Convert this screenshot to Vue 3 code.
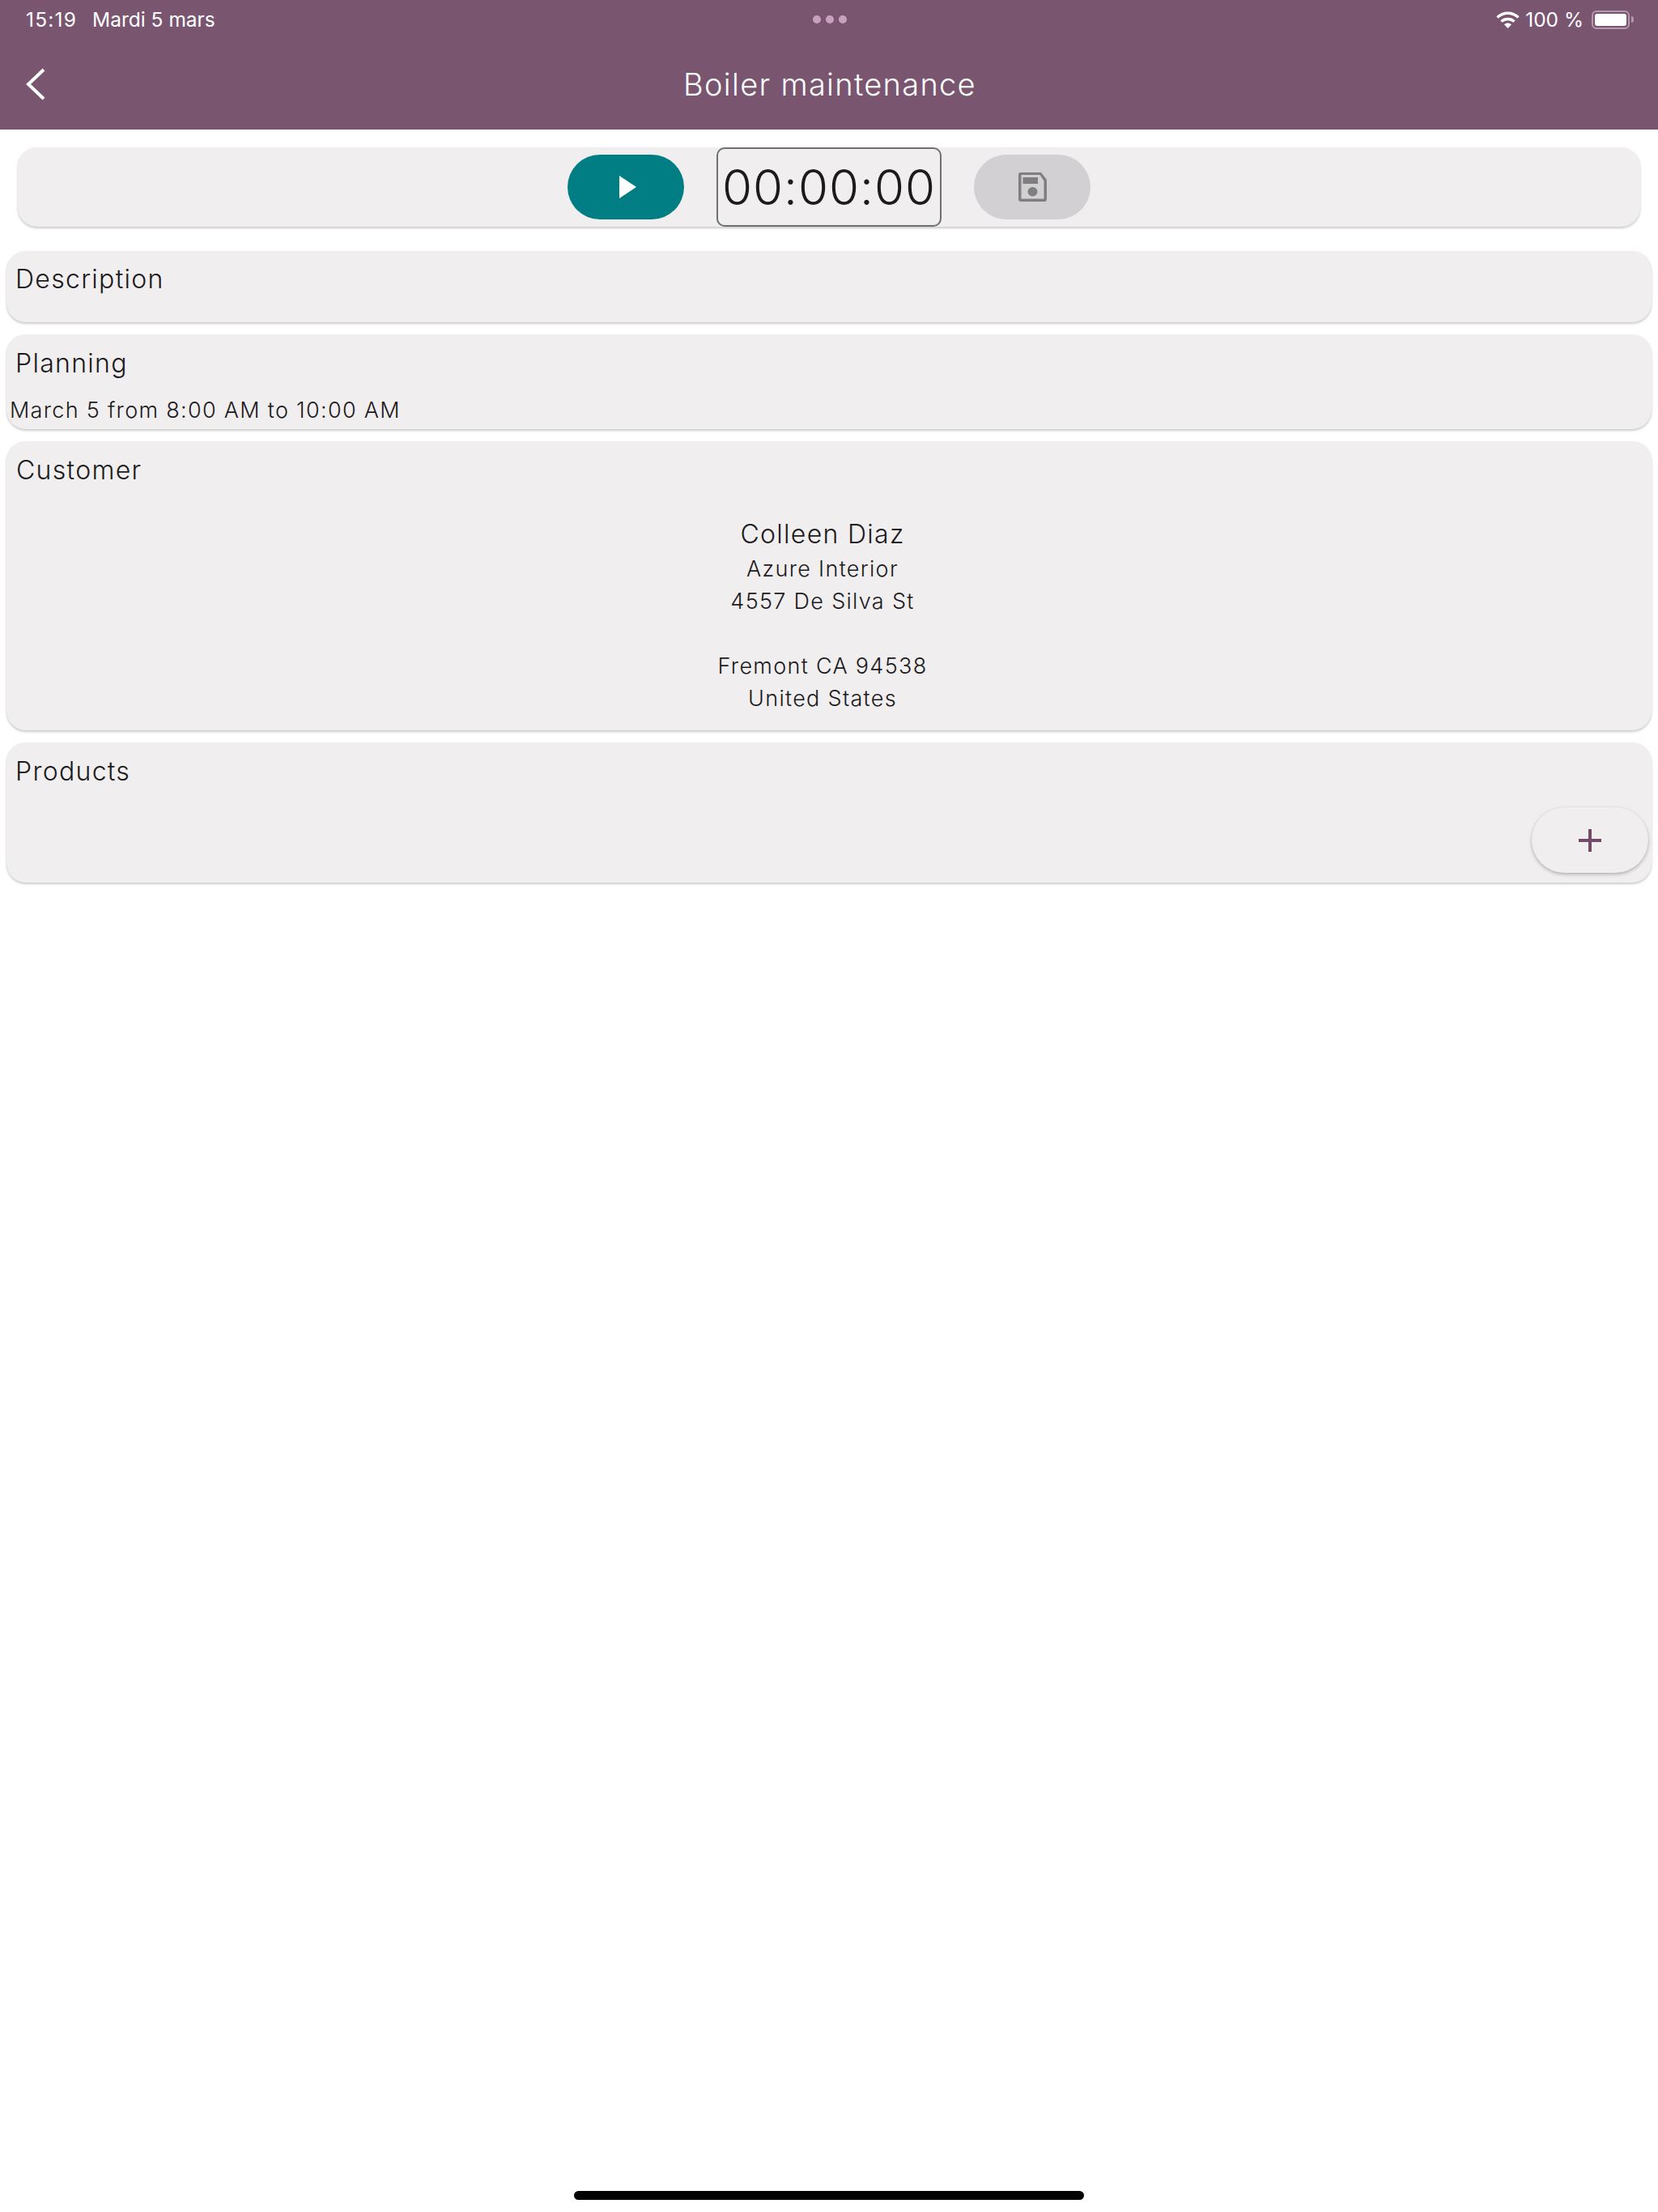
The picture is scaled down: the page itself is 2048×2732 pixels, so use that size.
<script setup>
const addressLines = ['Azure Interior', '4557 De Silva St', '', 'Fremont CA 94538', 'United States']
</script>

<template>
  <div class="page">
    <header class="appbar">
      <div class="status">
        <div class="status-left">
          <span class="time">15:19</span>
          <span>Mardi 5 mars</span>
        </div>
        <div class="dots"><i></i><i></i><i></i></div>
        <div class="status-right">
          <svg class="wifi" width="29" height="21" viewBox="0 0 29 21">
            <path d="M1.5 7.5C9 .5 20 .5 27.5 7.5" fill="none" stroke="#fff" stroke-width="3.4" />
            <path d="M6.5 12.5C11 8.5 18 8.500 22.5 12.5" fill="none" stroke="#fff" stroke-width="3.4" />
            <path d="M10 16.3C12.5 14 16.5 14 19 16.3L14.5 21Z" fill="#fff" />
          </svg>
          <span>100 %</span>
          <div class="battery"><div class="battery-fill"></div></div>
          <div class="battery-cap"></div>
        </div>
      </div>
      <div class="titlebar">
        <svg class="back" width="26" height="40" viewBox="0 0 26 40">
          <path d="M23 2L4 20L23 38" fill="none" stroke="#fff" stroke-width="4" />
        </svg>
        <h1>Boiler maintenance</h1>
      </div>
    </header>

    <section class="card timer-card">
      <button class="pill play">
        <svg class="play-icon" width="21" height="28" viewBox="0 0 21 28"><path d="M0 0L21 14L0 28Z" fill="#fff" /></svg>
      </button>
      <div class="timer">00:00:00</div>
      <button class="pill save">
        <svg width="35" height="36" viewBox="0 0 35 36">
          <path fill-rule="evenodd" fill="#7f7f7f" d="M3 0H28L35 9V33Q35 36 32 36H3Q0 36 0 33V3Q0 0 3 0ZM3.500 3V32.500H31.500V10.500L26.500 3Z" />
          <rect x="5.500" y="6" width="18.500" height="8" fill="#7f7f7f" />
          <ellipse cx="17.500" cy="23.700" rx="6" ry="5.700" fill="#7f7f7f" />
        </svg>
      </button>
    </section>

    <section class="card description">
      <h2>Description</h2>
    </section>

    <section class="card planning">
      <h2>Planning</h2>
      <p class="when">March 5 from 8:00 AM to 10:00 AM</p>
    </section>

    <section class="card customer">
      <h2>Customer</h2>
      <div class="contact">
        <div class="name">Colleen Diaz</div>
        <div v-for="(line, i) in addressLines" :key="i" class="line">{{ line }}</div>
      </div>
    </section>

    <section class="card products">
      <h2>Products</h2>
      <button class="add">
        <svg width="28" height="28" viewBox="0 0 28 28"><path d="M14 0V28M0 14H28" stroke="#714b67" stroke-width="4" fill="none" /></svg>
      </button>
    </section>

    <div class="home-bar"></div>
  </div>
</template>

<style>
html, body { margin: 0; background: #fff; }
</style>

<style scoped>
.page {
  position: relative;
  width: 2048px;
  height: 2732px;
  background: #fff;
  font-family: Inter, "Liberation Sans", sans-serif;
  color: #1c1a1c;
  overflow: hidden;
}
.appbar { height: 160px; background: #7a556f; color: #fff; }
.status {
  height: 48px;
  padding: 0 30px 0 32px;
  display: grid;
  grid-template-columns: 1fr auto 1fr;
  align-items: center;
  font-size: 24.500px;
  color: #fff;
}
.status-left { display: flex; gap: 19px; }
.time { letter-spacing: 1.2px; }
.status-right { display: flex; align-items: center; justify-content: flex-end; }
.wifi { margin-right: 7.500px; }
.battery {
  width: 47px;
  height: 23px;
  margin-left: 10px;
  box-sizing: border-box;
  border: 2px solid #b49aad;
  border-radius: 6px;
  padding: 2px;
}
.battery-fill { height: 100%; background: #fff; border-radius: 3px; }
.battery-cap { width: 3px; height: 8px; margin-left: 2px; background: #b49aad; border-radius: 0 3px 3px 0; }
.dots { display: flex; gap: 6px; }
.dots i { width: 10px; height: 10px; border-radius: 50%; background: #c9a0bf; }
.titlebar { position: relative; height: 112px; display: flex; align-items: center; justify-content: center; }
.back { position: absolute; left: 31px; top: 36px; }
h1 { margin: 0 0 0 2px; font-size: 38px; font-weight: 300; letter-spacing: 1.3px; }
.card {
  box-sizing: border-box;
  background: #f0eeef;
  border-radius: 24px;
  box-shadow: 0 2px 3px rgba(0, 0, 0, .2), 0 0 2px rgba(0, 0, 0, .03);
}
.timer-card {
  height: 98px;
  margin: 22px 22px 30px;
  display: flex;
  justify-content: center;
  align-items: center;
  gap: 40px;
}
.pill {
  width: 144px;
  height: 80px;
  border: 0;
  padding: 0;
  border-radius: 40px;
  display: flex;
  align-items: center;
  justify-content: center;
}
.play { background: #017e84; }
.play-icon { margin-left: 5px; }
.save { background: #d2d0d2; }
.timer {
  box-sizing: border-box;
  width: 278px;
  height: 98px;
  border: 2px solid #6f6f6f;
  border-radius: 10px;
  display: flex;
  align-items: center;
  justify-content: center;
  font-size: 60px;
  font-weight: 360;
  letter-spacing: 1px;
  color: #1c1b1c;
}
.description, .planning, .customer, .products {
  margin: 0 8px 15px;
  padding: 16px 11px 0;
  font-weight: 360;
}
h2 { margin: 0; font-size: 32px; font-weight: 360; letter-spacing: 1.3px; line-height: 40px; }
.customer h2 { margin-left: 1px; }
.description { height: 88px; padding-top: 15px; }
.planning { height: 117px; }
.when { margin: 20px 0 0 -7px; font-size: 27px; line-height: 36px; letter-spacing: 1.3px; }
.customer { height: 357px; }
.contact { margin-top: 36px; text-align: center; padding-right: 16px; }
.name { font-size: 32px; line-height: 46px; letter-spacing: 1.3px; }
.line { font-size: 27px; line-height: 40px; min-height: 40px; letter-spacing: 1.3px; }
.products { position: relative; height: 173px; }
.add {
  position: absolute;
  right: 4px;
  bottom: 12px;
  width: 144px;
  height: 81px;
  border: 0;
  padding: 0;
  border-radius: 41px;
  background: #f0eeef;
  box-shadow: 0 2px 4px rgba(0, 0, 0, .25), 0 0 2px rgba(0, 0, 0, .05);
  display: flex;
  align-items: center;
  justify-content: center;
}
.home-bar {
  position: absolute;
  left: 709px;
  top: 2706px;
  width: 630px;
  height: 11px;
  border-radius: 6px;
  background: #000;
}
</style>
